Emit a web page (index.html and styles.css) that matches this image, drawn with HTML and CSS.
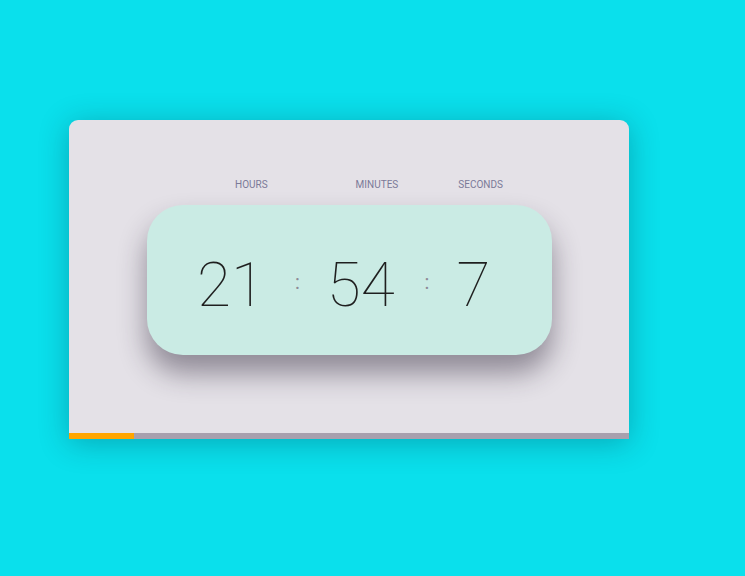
FILE: index.html
```
<!DOCTYPE html>
<html>
<head>
<meta charset="utf-8">
<link rel="stylesheet" href="styles.css">
</head>
<body>
<div class="card">
  <div class="labels">
    <span class="label label-hours">HOURS</span>
    <span class="label label-minutes">MINUTES</span>
    <span class="label label-seconds">SECONDS</span>
  </div>
  <div class="panel">
    <span class="num num-h">21</span>
    <span class="sep">:</span>
    <span class="num num-m">54</span>
    <span class="sep">:</span>
    <span class="num num-s">7</span>
  </div>
  <div class="progress"><div class="progress-fill" style="width:65px"></div></div>
</div>
</body>
</html>
```
FILE: styles.css
```
html, body {
  margin: 0;
  padding: 0;
}
body {
  background: #0ae0ec;
  width: 745px;
  height: 576px;
  overflow: hidden;
  font-family: Roboto, "Liberation Sans", sans-serif;
}
.card {
  margin: 120px 0 0 69px;
  width: 560px;
  height: 319px;
  background: #e4e1e7;
  border-radius: 9px 9px 0 0;
  box-shadow: 0 4px 30px rgba(0, 40, 60, 0.3);
  display: flex;
  flex-direction: column;
}
.labels {
  display: flex;
  padding: 59px 0 0 166px;
  height: 12px;
  font-size: 10px;
  line-height: 12px;
  color: #7b7a98;
}
.label-minutes { margin-left: 88px; }
.label-seconds { margin-left: 60px; }
.panel {
  margin: 14px 0 0 78px;
  width: 405px;
  height: 150px;
  background: #caebe4;
  border-radius: 36px;
  box-shadow: 0 18px 28px rgba(40, 30, 50, 0.45);
  display: flex;
  align-items: center;
  padding: 10px 0 0 50px;
  box-sizing: border-box;
}
.num {
  font-size: 62px;
  font-weight: 100;
  color: #1f1f1f;
  line-height: 1;
}
.sep {
  font-size: 20px;
  color: #8e8a96;
  margin: 0 27px 6px 30px;
}
.progress {
  margin-top: auto;
  height: 6px;
  background: #a8a0ae;
}
.progress-fill {
  height: 100%;
  background: #ffa500;
}
```
